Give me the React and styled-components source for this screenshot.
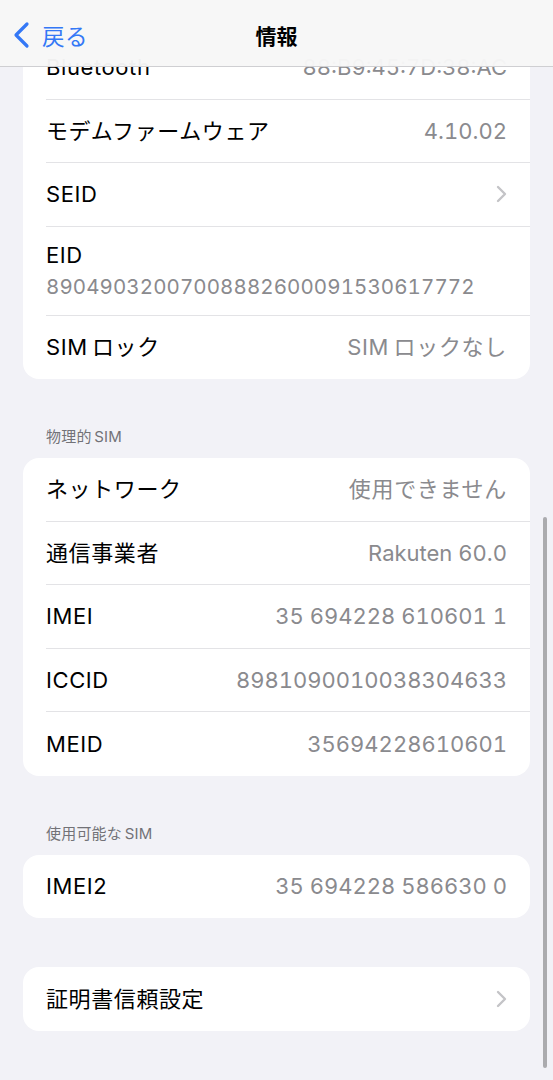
import React from "react";
import styled, { createGlobalStyle } from "styled-components";

const Global = createGlobalStyle`
  html, body { margin: 0; padding: 0; background: #f2f2f7; overflow: hidden; }
  body { font-family: "Inter", "Noto Sans CJK JP", sans-serif; -webkit-font-smoothing: antialiased; }
`;

const Page = styled.div`
  position: relative;
  width: 553px;
  height: 1080px;
  background: #f2f2f7;
  overflow: hidden;
`;

const Nav = styled.header`
  position: absolute;
  top: 0;
  left: 0;
  right: 0;
  height: 66px;
  background: rgba(247, 247, 247, 0.97);
  border-bottom: 1px solid #cfcfd2;
  display: flex;
  align-items: center;
  justify-content: center;
  z-index: 5;
`;

const Back = styled.div`
  position: absolute;
  left: 12px;
  top: 0;
  height: 70px;
  display: flex;
  align-items: center;
  gap: 12px;
  color: #3478f6;
  font-size: 22.5px;
  letter-spacing: 0.5px;
`;

const Title = styled.h1`
  margin: 4px 0 0;
  font-size: 21px;
  font-weight: 700;
  color: #000;
`;

const Content = styled.main`
  padding: 36px 23px 60px 23px;
  display: flex;
  flex-direction: column;
`;

const Card = styled.section`
  background: #fff;
  border-radius: 16px;
  overflow: hidden;
  margin-top: ${(p) => p.$gap || 0}px;
`;

const SectionHeader = styled.div`
  padding: 48px 0 11px 23px;
  font-size: 15px;
  line-height: 20px;
  color: #727277;
  letter-spacing: 0.2px;
`;

const Row = styled.div`
  padding-left: 23px;
`;

const RowInner = styled.div`
  height: ${(p) => p.$h || 63.5}px;
  box-sizing: border-box;
  padding-right: 23px;
  display: flex;
  flex-direction: ${(p) => (p.$stack ? "column" : "row")};
  align-items: ${(p) => (p.$stack ? "flex-start" : "center")};
  justify-content: ${(p) => (p.$stack ? "center" : "space-between")};
  border-bottom: ${(p) => (p.$last ? "none" : "1px solid #e3e3e6")};
`;

const Label = styled.span`
  font-size: 22px;
  color: #000;
  line-height: 28px;
  letter-spacing: 0.6px;
`;

const Value = styled.span`
  font-size: 22px;
  color: #8a8a8e;
  line-height: 28px;
  font-variant-numeric: tabular-nums;
  letter-spacing: ${(p) => (p.$cjk ? "0.7px" : "0")};
`;

const SubValue = styled.span`
  font-size: 20.5px;
  color: #8a8a8e;
  line-height: 28px;
  margin-top: 4px;
  font-variant-numeric: tabular-nums;
  letter-spacing: 0.1px;
`;

const Scrollbar = styled.div`
  position: absolute;
  right: 6px;
  top: 517px;
  width: 4px;
  height: 551px;
  border-radius: 2px;
  background: #ababae;
`;

const Chevron = () => (
  <svg width="11" height="18" viewBox="0 0 11 18" fill="none">
    <path d="M2 2l7 7-7 7" stroke="#c4c4c7" strokeWidth="2.4" strokeLinecap="round" strokeLinejoin="round" />
  </svg>
);

const BackChevron = () => (
  <svg width="18" height="28" viewBox="0 0 18 28" fill="none">
    <path d="M15 3L4 14l11 11" stroke="#3478f6" strokeWidth="3.2" strokeLinecap="round" strokeLinejoin="round" />
  </svg>
);

const Item = ({ label, value, chevron, last, stack, h, cjk }) => (
  <Row>
    <RowInner $last={last} $stack={stack} $h={h}>
      <Label>{label}</Label>
      {stack ? (
        <SubValue>{value}</SubValue>
      ) : chevron ? (
        <Chevron />
      ) : (
        <Value $cjk={cjk}>{value}</Value>
      )}
    </RowInner>
  </Row>
);

export default function App() {
  return (
    <Page>
      <Global />
      <Nav>
        <Back>
          <BackChevron />
          <span>戻る</span>
        </Back>
        <Title>情報</Title>
      </Nav>
      <Content>
        <Card>
          <Item label="Bluetooth" value="88:B9:45:7D:38:AC" />
          <Item label="モデムファームウェア" value="4.10.02" />
          <Item label="SEID" chevron />
          <Item label="EID" value="89049032007008882600091530617772" stack h={89} />
          <Item label={"SIM\u2006ロック"} value={"SIM\u2006ロックなし"} cjk last />
        </Card>
        <SectionHeader>{"物理的\u2006SIM"}</SectionHeader>
        <Card>
          <Item label="ネットワーク" value="使用できません" cjk />
          <Item label="通信事業者" value="Rakuten 60.0" />
          <Item label="IMEI" value="35 694228 610601 1" />
          <Item label="ICCID" value="8981090010038304633" />
          <Item label="MEID" value="35694228610601" last />
        </Card>
        <SectionHeader>{"使用可能な\u2006SIM"}</SectionHeader>
        <Card>
          <Item label="IMEI2" value="35 694228 586630 0" last />
        </Card>
        <Card $gap={49}>
          <Item label="証明書信頼設定" chevron last />
        </Card>
      </Content>
      <Scrollbar />
    </Page>
  );
}
